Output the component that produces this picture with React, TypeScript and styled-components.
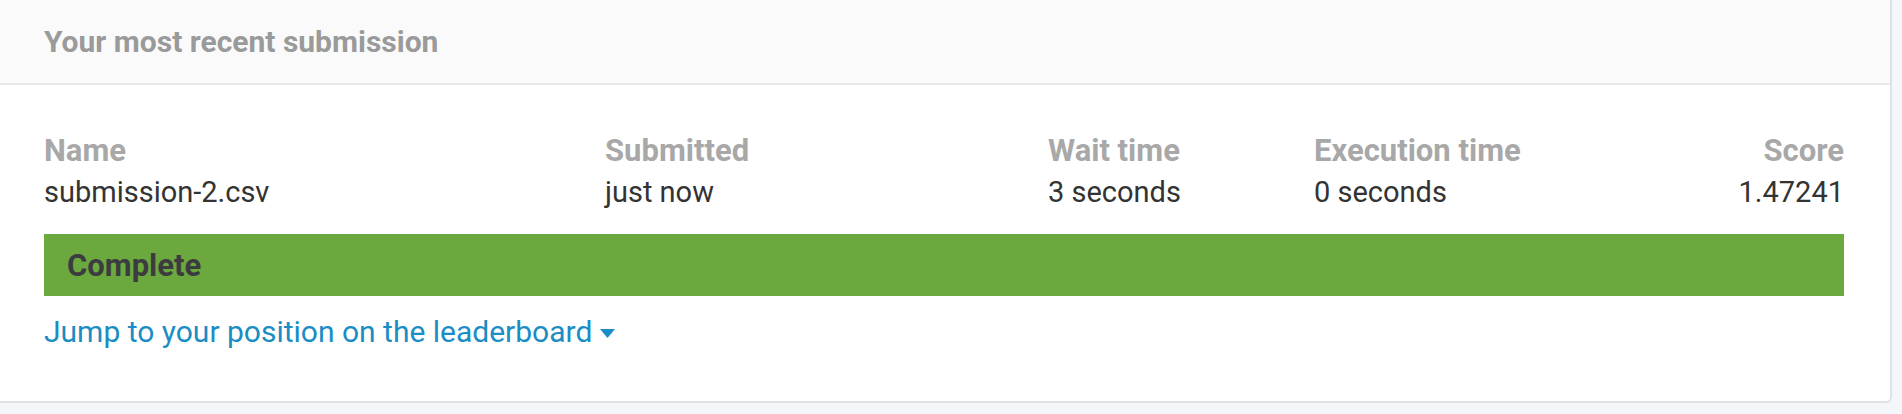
import React from "react";
import styled, { createGlobalStyle } from "styled-components";

const Global = createGlobalStyle`
  html, body { margin: 0; padding: 0; background: #f4f7f9; }
  body { font-family: Roboto, "Liberation Sans", Arial, sans-serif; }
`;

const Page = styled.div`
  width: 1902px;
  height: 414px;
  overflow: hidden;
  padding-right: 10px;
  box-sizing: border-box;
`;

const Card = styled.section`
  background: #fff;
  border-right: 2px solid #dfe2e4;
  border-bottom: 2px solid #dfe2e4;
  border-bottom-right-radius: 6px;
  height: 403px;
  box-sizing: border-box;
  display: flex;
  flex-direction: column;
`;

const Header = styled.header`
  height: 85px;
  box-sizing: border-box;
  background: #fafafa;
  border-bottom: 2px solid #e8e8e8;
  display: flex;
  align-items: center;
  padding: 0 44px;
`;

const Title = styled.h2`
  margin: 0;
  font-size: 30px;
  font-weight: 700;
  color: #9a9a9a;
`;

const Body = styled.div`
  padding: 49px 46px 0 44px;
`;

const Grid = styled.div`
  display: grid;
  grid-template-columns: 561px 443px 266px 1fr auto;
  row-gap: 7px;
`;

const Label = styled.div<{ $right?: boolean }>`
  font-size: 31px;
  font-weight: 700;
  color: #a8a8a8;
  line-height: 34px;
  text-align: ${(p) => (p.$right ? "right" : "left")};
`;

const Value = styled.div<{ $right?: boolean }>`
  font-size: 29px;
  color: #333333;
  line-height: 34px;
  text-align: ${(p) => (p.$right ? "right" : "left")};
`;

const Status = styled.div`
  margin-top: 25px;
  height: 62px;
  background: #6ba83e;
  display: flex;
  align-items: center;
  padding: 0 23px;
  font-size: 31px;
  font-weight: 700;
  color: #3c3c40;
`;

const JumpLink = styled.a`
  display: inline-flex;
  align-items: center;
  gap: 8px;
  margin-top: 19px;
  font-size: 30px;
  color: #1a8dc4;
  text-decoration: none;
  line-height: 34px;
  cursor: pointer;
`;

const Caret = styled.svg`
  width: 15px;
  height: 9px;
  margin-top: 3px;
`;

export default function App() {
  return (
    <>
      <Global />
      <Page>
        <Card>
          <Header>
            <Title>Your most recent submission</Title>
          </Header>
          <Body>
            <Grid>
              <Label>Name</Label>
              <Label>Submitted</Label>
              <Label>Wait time</Label>
              <Label>Execution time</Label>
              <Label $right>Score</Label>
              <Value>submission-2.csv</Value>
              <Value>just now</Value>
              <Value>3 seconds</Value>
              <Value>0 seconds</Value>
              <Value $right>1.47241</Value>
            </Grid>
            <Status>Complete</Status>
            <JumpLink>
              Jump to your position on the leaderboard
              <Caret viewBox="0 0 15 9">
                <path d="M0 0 L15 0 L7.5 9 Z" fill="#1a8dc4" />
              </Caret>
            </JumpLink>
          </Body>
        </Card>
      </Page>
    </>
  );
}
